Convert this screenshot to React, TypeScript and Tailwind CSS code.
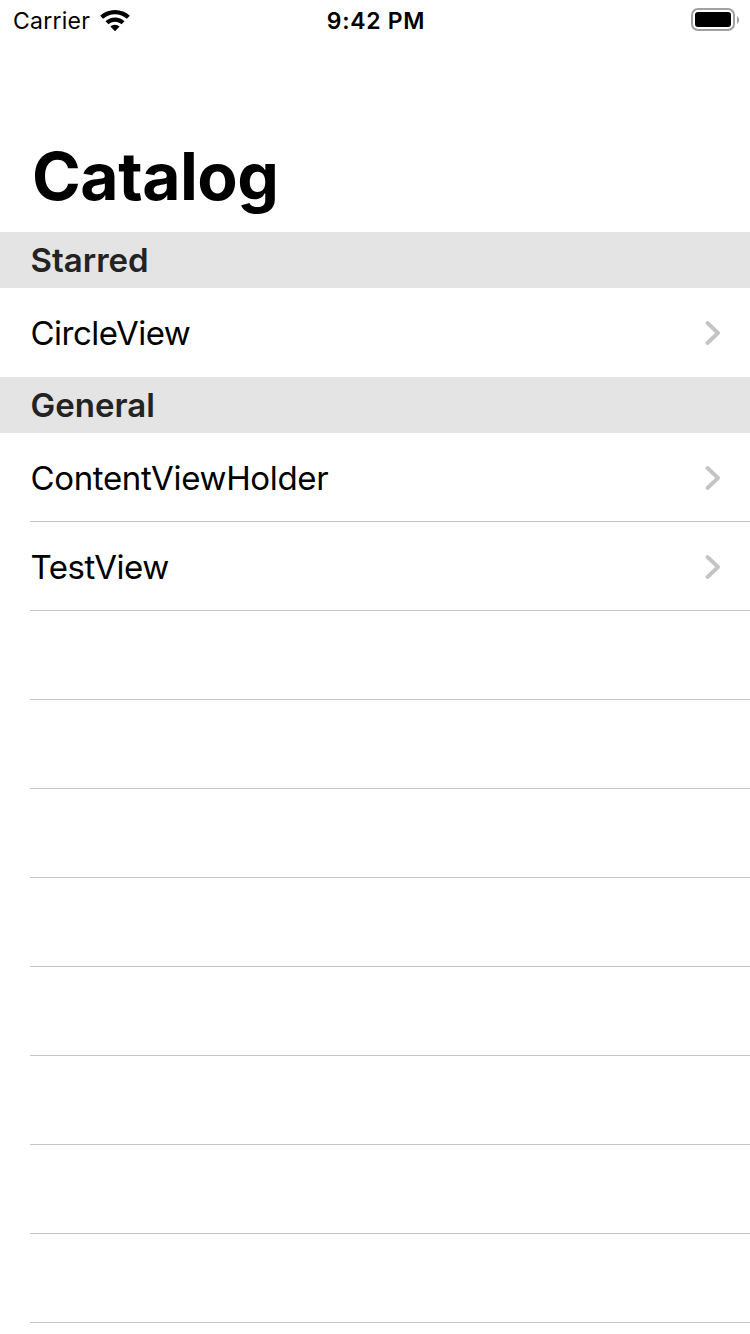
import React from "react";

const Chevron = () => (
  <svg className="mr-[29px] h-[26px] w-4" viewBox="0 0 16 26" fill="none">
    <path d="M2.500 3 L13 13 L2.500 23" stroke="#c4c4c6" strokeWidth="3.800" strokeLinecap="round" strokeLinejoin="round" />
  </svg>
);

function Header({ title }: { title: string }) {
  return (
    <h2 className="flex h-14 items-center bg-[#e4e4e4] pl-[30.5px] text-[33px] leading-10 font-semibold text-[#232323]">
      <span>{title}</span>
    </h2>
  );
}

function Row({ title, last, tracking }: { title?: string; last?: boolean; tracking?: string }) {
  return (
    <li className="h-[89px] pl-[30px]">
      <div className={last ? "flex h-full items-center justify-between pt-px" : "flex h-full items-center justify-between border-b border-[#c6c6c8] pt-0.5"}>
        {title && (
          <>
            <span className={"pl-[0.5px] text-[33px] leading-10 " + (tracking ?? "")}>{title}</span>
            <Chevron />
          </>
        )}
      </div>
    </li>
  );
}

export default function App() {
  return (
    <main className="h-[1334px] w-[750px] overflow-hidden bg-white font-['Inter',sans-serif] text-black">
      <div className="grid h-10 grid-cols-3 items-center pr-[11px] pl-[13px]">
        <div className="flex items-center gap-2.5 pt-0.5">
          <span className="text-[23px] leading-[38px] tracking-[0.25px]">Carrier</span>
          <svg className="h-[22px] w-[30px]" viewBox="0 0 30 22">
            <path d="M15 0C9.200 0 4 2.200.2 5.800l2.900 3C6.300 5.900 10.400 4.200 15 4.200s8.700 1.700 11.900 4.600l2.900-3C26 2.200 20.800 0 15 0Z" />
            <path d="M15 7.400c-3.700 0-7 1.400-9.500 3.800l3 3c1.700-1.600 3.900-2.500 6.500-2.500s4.800.9 6.500 2.500l3-3C22 8.800 18.700 7.400 15 7.400Z" />
            <path d="M15 14.700c-1.800 0-3.400.7-4.600 1.900L15 21.300l4.600-4.700a6.600 6.600 0 0 0-4.600-1.900Z" />
          </svg>
        </div>
        <time className="pt-0.5 text-center text-[23px] leading-[38px] font-semibold tracking-[0.7px]">9:42 PM</time>
        <svg className="h-6 w-12 justify-self-end" viewBox="0 0 48 24">
          <rect x="1" y="1" width="42" height="21" rx="6" fill="none" stroke="#a0a0a0" strokeWidth="2" />
          <rect x="4" y="4" width="36" height="15" rx="3" />
          <path d="M46 8v8c1.200-.8 2-2.300 2-4s-.8-3.200-2-4Z" fill="#a0a0a0" />
        </svg>
      </div>
      <h1 className="flex h-48 items-end pb-[18px] pl-8 text-[66px] leading-[76px] font-bold tracking-[-0.5px]">Catalog</h1>
      <Header title="Starred" />
      <ul><Row title="CircleView" tracking="tracking-[-0.5px]" last /></ul>
      <Header title="General" />
      <ul>
        <Row title="ContentViewHolder" tracking="tracking-[-0.35px]" />
        <Row title="TestView" tracking="tracking-[-0.5px]" />
        {Array.from({ length: 8 }, (_, i) => <Row key={i} />)}
      </ul>
    </main>
  );
}
